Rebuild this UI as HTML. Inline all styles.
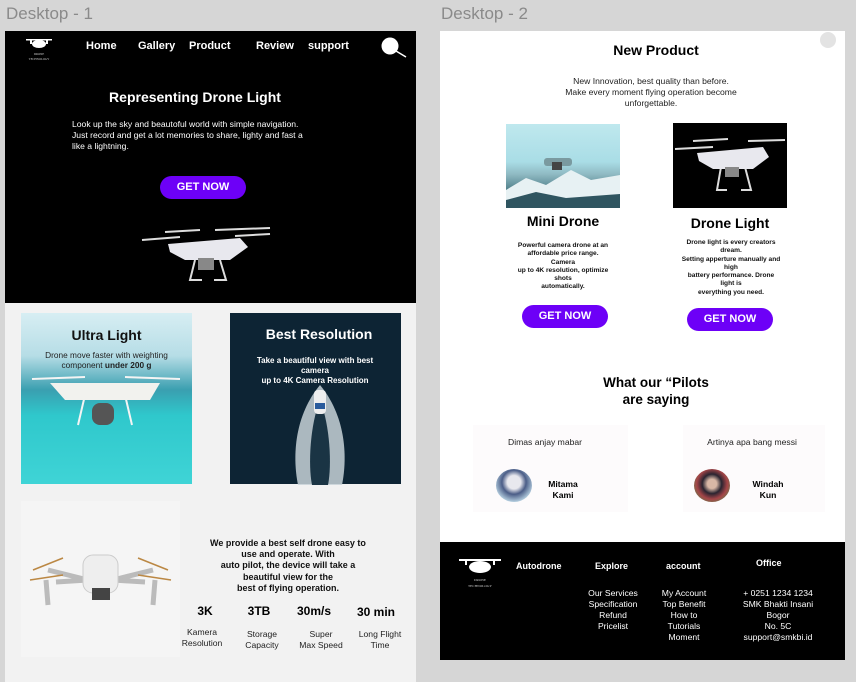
<!DOCTYPE html>
<html><head><meta charset="utf-8"><style>
*{margin:0;padding:0;box-sizing:border-box}
body{width:856px;height:682px;background:#d6d6d6;position:relative;overflow:hidden;font-family:"Liberation Sans",sans-serif}
.a{position:absolute}
.c{text-align:center}
.w{color:#fff}
.b{font-weight:bold}
.btn{position:absolute;background:#6d00f7;color:#fff;font-weight:bold;font-size:11px;border-radius:12px;text-align:center;line-height:23px}
.lbl{font-size:17px;color:#8a8a8a}
</style></head><body>
<div class="a lbl" style="left:6px;top:4px">Desktop - 1</div>
<div class="a lbl" style="left:441px;top:4px">Desktop - 2</div>

<!-- Frame 1 -->
<div class="a" style="left:5px;top:31px;width:411px;height:651px;background:#f2f2f2"></div>
<div class="a" style="left:5px;top:31px;width:411px;height:272px;background:#000"></div>
<svg class="a" style="left:22px;top:35px" width="34" height="30" viewBox="0 0 34 30"><g fill="#fff"><rect x="4" y="4" width="26" height="1.5"/><ellipse cx="17" cy="9" rx="7" ry="4"/><rect x="8" y="4" width="2" height="5"/><rect x="24" y="4" width="2" height="5"/></g><text x="17" y="20" font-size="3" fill="#ccc" text-anchor="middle" font-family="Liberation Serif">DRONE</text><text x="17" y="25" font-size="3" fill="#ccc" text-anchor="middle" font-family="Liberation Serif">TECHNOLOGY</text></svg>
<div class="a w b" style="top:40px;left:86px;font-size:11px">Home</div>
<div class="a w b" style="top:40px;left:138px;font-size:11px">Gallery</div>
<div class="a w b" style="top:40px;left:189px;font-size:11px">Product</div>
<div class="a w b" style="top:40px;left:256px;font-size:11px">Review</div>
<div class="a w b" style="top:40px;left:308px;font-size:11px">support</div>
<svg class="a" style="left:381px;top:37px" width="26" height="22"><circle cx="9" cy="9" r="8.5" fill="#fff"/><line x1="15" y1="14" x2="25" y2="20" stroke="#fff" stroke-width="1.5"/></svg>
<div class="a w b c" style="left:5px;width:380px;top:89px;font-size:14px">Representing Drone Light</div>
<div class="a w" style="left:72px;top:119px;font-size:8.6px;line-height:11px;width:280px">Look up the sky and beautoful world with simple navigation.<br>Just record and get a lot memories to share, lighty and fast a<br>like a lightning.</div>
<div class="btn" style="left:160px;top:176px;width:86px;height:23px">GET NOW</div>
<svg class="a" style="left:140px;top:222px" width="135" height="62" viewBox="0 0 135 62"><g stroke="#ddd" stroke-width="2" fill="none"><line x1="2" y1="18" x2="40" y2="15"/><line x1="25" y1="10" x2="60" y2="8"/><line x1="75" y1="8" x2="130" y2="6"/><line x1="95" y1="14" x2="130" y2="12"/><path d="M55 38 L50 58 L62 58 M80 38 L86 58 L74 58"/></g><path d="M28 22 L100 16 L108 25 L90 38 L45 38 L30 30Z" fill="#e8e8ee"/><rect x="58" y="36" width="16" height="12" fill="#888"/></svg>

<div class="a" style="left:21px;top:313px;width:171px;height:171px;background:linear-gradient(#d7eef3 0%,#b6dde6 25%,#3a9fb0 45%,#2fc8cc 60%,#3fd4d6 100%)"></div>
<svg class="a" style="left:30px;top:375px" width="155" height="70" viewBox="0 0 155 70"><g stroke="#f4f4f4" stroke-width="2" fill="none"><line x1="2" y1="4" x2="55" y2="2"/><line x1="95" y1="2" x2="150" y2="4"/><path d="M55 20 L48 50 M95 20 L102 50"/></g><path d="M20 8 L130 8 L120 25 L35 25Z" fill="#f2f2ee"/><rect x="62" y="28" width="22" height="22" rx="8" fill="#555"/></svg>
<div class="a b c" style="left:21px;width:171px;top:327px;font-size:14px;color:#111">Ultra Light</div>
<div class="a c" style="left:21px;width:171px;top:350px;font-size:8.3px;line-height:10px;color:#222">Drone move faster with weighting<br>component <b>under 200 g</b></div>

<div class="a" style="left:230px;top:313px;width:171px;height:171px;background:#0d2434"></div>
<svg class="a" style="left:290px;top:385px" width="60" height="100" viewBox="0 0 60 100"><path d="M30 0 C5 30 2 70 8 100 L52 100 C58 70 55 30 30 0Z" fill="#c8d2d8" opacity=".85"/><path d="M30 15 C20 40 18 80 22 100 L38 100 C42 80 40 40 30 15Z" fill="#1a3444"/><rect x="24" y="5" width="12" height="24" rx="4" fill="#eee"/><rect x="25" y="18" width="10" height="6" fill="#2a5b9c"/></svg>
<div class="a w b c" style="left:230px;width:178px;top:326px;font-size:14px">Best Resolution</div>
<div class="a w b c" style="left:250px;width:130px;top:356px;font-size:8px;line-height:10px">Take a beautiful view with best camera<br>up to 4K Camera Resolution</div>

<div class="a" style="left:21px;top:501px;width:159px;height:156px;background:#f5f5f5"></div>
<svg class="a" style="left:28px;top:550px" width="145" height="56" viewBox="0 0 145 56"><g stroke="#bbb" stroke-width="5" fill="none"><line x1="20" y1="20" x2="60" y2="30"/><line x1="125" y1="20" x2="85" y2="30"/><line x1="28" y1="32" x2="60" y2="30"/><line x1="117" y1="32" x2="85" y2="30"/><path d="M18 30 L20 55 M127 30 L125 55"/></g><g stroke="#b84" stroke-width="1.5"><line x1="5" y1="20" x2="35" y2="8"/><line x1="110" y1="8" x2="140" y2="20"/><line x1="2" y1="30" x2="35" y2="25"/><line x1="110" y1="25" x2="143" y2="30"/></g><rect x="55" y="5" width="35" height="38" rx="10" fill="#eee" stroke="#ccc"/><rect x="64" y="38" width="18" height="12" fill="#444"/></svg>
<div class="a b c" style="left:195px;width:186px;top:538px;font-size:9px;line-height:11.2px;color:#111">We provide a best self drone easy to<br>use and operate. With<br>auto pilot, the device will take a<br>beautiful view for the<br>best of flying operation.</div>
<div class="a b c" style="left:185px;width:40px;top:604px;font-size:12px">3K</div>
<div class="a b c" style="left:239px;width:40px;top:604px;font-size:12px">3TB</div>
<div class="a b c" style="left:289px;width:50px;top:604px;font-size:12px">30m/s</div>
<div class="a b c" style="left:350px;width:52px;top:605px;font-size:12px">30 min</div>
<div class="a c" style="left:172px;width:60px;top:627px;font-size:8.6px;line-height:11px;color:#222">Kamera<br>Resolution</div>
<div class="a c" style="left:232px;width:60px;top:629px;font-size:8.6px;line-height:11px;color:#222">Storage<br>Capacity</div>
<div class="a c" style="left:290px;width:62px;top:629px;font-size:8.6px;line-height:11px;color:#222">Super<br>Max Speed</div>
<div class="a c" style="left:350px;width:60px;top:629px;font-size:8.6px;line-height:11px;color:#222">Long Flight<br>Time</div>

<!-- Frame 2 -->
<div class="a" style="left:440px;top:31px;width:405px;height:629px;background:#fff"></div>
<div class="a" style="left:820px;top:32px;width:16px;height:16px;border-radius:50%;background:#e3e3e3"></div>
<div class="a b c" style="left:440px;width:432px;top:42px;font-size:14px">New Product</div>
<div class="a c" style="left:440px;width:422px;top:76px;font-size:8.6px;line-height:11px;color:#222">New Innovation, best quality than before.<br>Make every moment flying operation become<br>unforgettable.</div>
<div class="a" style="left:506px;top:124px;width:114px;height:84px;background:linear-gradient(#bfe8ee 0%,#a9dde6 45%,#8fb9c2 60%,#3b6c77 85%,#6d8d94 100%)"></div>
<svg class="a" style="left:506px;top:150px" width="114" height="58" viewBox="0 0 114 58"><path d="M0 40 L20 28 L40 35 L65 20 L85 30 L114 25 L114 58 L0 58Z" fill="#e7f1f3"/><path d="M0 50 L30 42 L60 48 L114 44 L114 58 L0 58Z" fill="#2f5560"/><rect x="38" y="8" width="28" height="8" rx="3" fill="#7a9aa0"/><rect x="46" y="12" width="10" height="8" fill="#444"/></svg>
<div class="a" style="left:673px;top:123px;width:114px;height:85px;background:#000"></div>
<svg class="a" style="left:673px;top:135px" width="114" height="60" viewBox="0 0 114 60"><g stroke="#ddd" stroke-width="2" fill="none"><line x1="2" y1="14" x2="40" y2="12"/><line x1="75" y1="6" x2="112" y2="5"/><line x1="20" y1="6" x2="55" y2="4"/><path d="M48 32 L44 55 L54 55 M72 32 L78 55 L68 55"/></g><path d="M24 18 L90 12 L96 22 L80 34 L40 34 L26 26Z" fill="#e8e8ee"/><rect x="52" y="32" width="14" height="10" fill="#888"/></svg>
<div class="a b c" style="left:506px;width:114px;top:213px;font-size:14px">Mini Drone</div>
<div class="a b c" style="left:673px;width:114px;top:215px;font-size:14px">Drone Light</div>
<div class="a b c" style="left:511px;width:104px;top:242px;font-size:6.6px;line-height:8.3px;color:#111">Powerful camera drone at an affordable price range.<br>Camera<br>up to 4K resolution, optimize shots<br>automatically.</div>
<div class="a b c" style="left:681px;width:100px;top:239px;font-size:6.6px;line-height:8.3px;color:#111">Drone light is every creators dream.<br>Setting apperture manually and high<br>battery performance. Drone light is<br>everything you need.</div>
<div class="btn" style="left:522px;top:305px;width:86px;height:23px">GET NOW</div>
<div class="btn" style="left:687px;top:308px;width:86px;height:23px">GET NOW</div>
<div class="a b c" style="left:440px;width:432px;top:374px;font-size:13.5px;line-height:17px">What our “Pilots<br>are saying</div>
<div class="a" style="left:473px;top:425px;width:155px;height:87px;background:#fdfbfc"></div>
<div class="a" style="left:683px;top:425px;width:142px;height:87px;background:#fdfbfc"></div>
<div class="a c" style="left:475px;width:140px;top:437px;font-size:8.6px;color:#222">Dimas anjay mabar</div>
<div class="a c" style="left:682px;width:140px;top:437px;font-size:8.6px;color:#222">Artinya apa bang messi</div>
<div class="a" style="left:496px;top:469px;width:36px;height:33px;border-radius:50%;background:radial-gradient(circle at 50% 40%,#e8e8ee 25%,#4b5d87 45%,#b9d3e3 75%)"></div>
<div class="a" style="left:694px;top:469px;width:36px;height:33px;border-radius:50%;background:radial-gradient(circle at 50% 45%,#d9b8a6 18%,#2a2430 38%,#a54548 60%,#6d7a4c 80%)"></div>
<div class="a b c" style="left:540px;width:46px;top:479px;font-size:8.6px;line-height:11px">Mitama<br>Kami</div>
<div class="a b c" style="left:745px;width:46px;top:479px;font-size:8.6px;line-height:11px">Windah<br>Kun</div>

<div class="a" style="left:440px;top:542px;width:405px;height:118px;background:#000"></div>
<svg class="a" style="left:455px;top:555px" width="50" height="36" viewBox="0 0 50 36"><g fill="#fff"><rect x="4" y="4" width="42" height="2"/><ellipse cx="25" cy="12" rx="11" ry="6"/><rect x="10" y="4" width="2" height="6"/><rect x="38" y="4" width="2" height="6"/></g><text x="25" y="26" font-size="3.5" fill="#ccc" text-anchor="middle" font-family="Liberation Serif">DRONE</text><text x="25" y="32" font-size="3.5" fill="#ccc" text-anchor="middle" font-family="Liberation Serif">TECHNOLOGY</text></svg>
<div class="a w b" style="left:516px;top:561px;font-size:9px">Autodrone</div>
<div class="a w b" style="left:595px;top:561px;font-size:9px">Explore</div>
<div class="a w b" style="left:666px;top:561px;font-size:9px">account</div>
<div class="a w b" style="left:756px;top:558px;font-size:9px">Office</div>
<div class="a w c" style="left:578px;width:70px;top:588px;font-size:8.6px;line-height:11px">Our Services<br>Specification<br>Refund<br>Pricelist</div>
<div class="a w c" style="left:650px;width:68px;top:588px;font-size:8.6px;line-height:11px">My Account<br>Top Benefit<br>How to<br>Tutorials<br>Moment</div>
<div class="a w c" style="left:733px;width:90px;top:588px;font-size:8.6px;line-height:11px">+ 0251 1234 1234<br>SMK Bhakti Insani<br>Bogor<br>No. 5C<br>support@smkbi.id</div>
</body></html>
